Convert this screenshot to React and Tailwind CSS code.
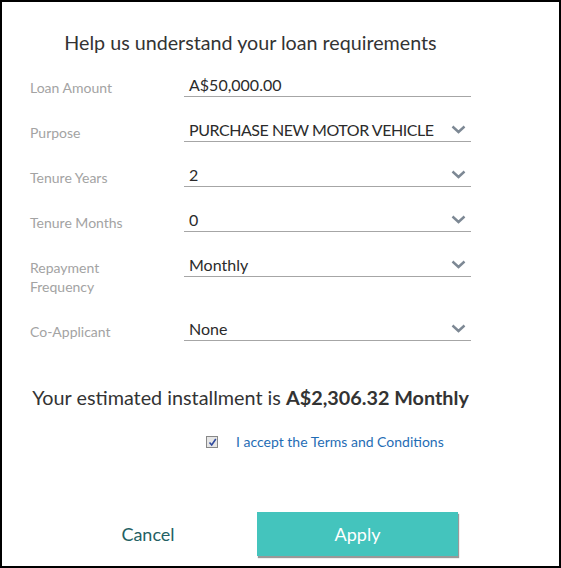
import React from "react";

function Chevron() {
  return (
    <svg width="15" height="9" viewBox="0 0 15 9" className="shrink-0 mb-[7px]">
      <path d="M1.5 1.5 L7.5 7 L13.5 1.5" fill="none" stroke="#7d8894" strokeWidth="2.4" />
    </svg>
  );
}

function Row({ label, value, select, upper }) {
  return (
    <div className="flex items-start">
      <div className="w-[154px] pt-[6px] pr-[40px] text-[14px] leading-[19px] text-[#a3a3a3]">{label}</div>
      <div className="w-[287px] h-[25px] border-b border-[#a6a6a6] flex items-end justify-between pl-[5px] pr-[5px]">
        <span className={upper ? "text-[16px] leading-[22px] text-[#2b2b2b] whitespace-nowrap tracking-[-0.45px]" : "text-[16px] leading-[22px] text-[#2b2b2b] whitespace-nowrap"}>{value}</span>
        {select ? <Chevron /> : null}
      </div>
    </div>
  );
}

export default function App() {
  return (
    <div className="w-[561px] h-[568px] border-2 border-black bg-white font-['Lato',sans-serif] flex flex-col pl-[28px]">
      <div className="w-[441px] pt-[27px] text-center text-[19.7px] leading-[28px] text-[#333] whitespace-nowrap">
        Help us understand your loan requirements
      </div>
      <div className="mt-[15px] flex flex-col gap-[20px] w-[441px]">
        <Row label="Loan Amount" value="A$50,000.00" />
        <Row label="Purpose" value="PURCHASE NEW MOTOR VEHICLE" select upper />
        <Row label="Tenure Years" value="2" select />
        <Row label="Tenure Months" value="0" select />
        <Row label="Repayment Frequency" value="Monthly" select />
        <Row label="Co-Applicant" value="None" select />
      </div>
      <div className="mt-[42px] w-[441px] flex justify-center text-[19.8px] leading-[28px] text-[#333] whitespace-nowrap">
        <span>Your estimated installment is <span className="font-bold">A$2,306.32 Monthly</span></span>
      </div>
      <div className="mt-[21px] h-[20px] flex items-center pl-[176px]">
        <span className="w-[12px] h-[12px] border border-[#888] bg-[#e6e6e6] flex items-center justify-center">
          <svg width="9" height="9" viewBox="0 0 9 9">
            <path d="M1.5 4.5 L3.7 7 L7.8 1" fill="none" stroke="#2f4a9e" strokeWidth="1.6" />
          </svg>
        </span>
        <span className="ml-[18px] text-[14px] leading-[20px] text-[#1f6db5]">I accept the Terms and Conditions</span>
      </div>
      <div className="mt-[60px] flex items-center">
        <button className="ml-[18px] w-[200px] h-[44px] text-[18px] text-[#245f63] bg-transparent">Cancel</button>
        <button className="ml-[9px] w-[201px] h-[44px] bg-[#44c4bd] text-white text-[18px] shadow-[1px_2px_1px_rgba(0,0,0,0.4)]">Apply</button>
      </div>
    </div>
  );
}
